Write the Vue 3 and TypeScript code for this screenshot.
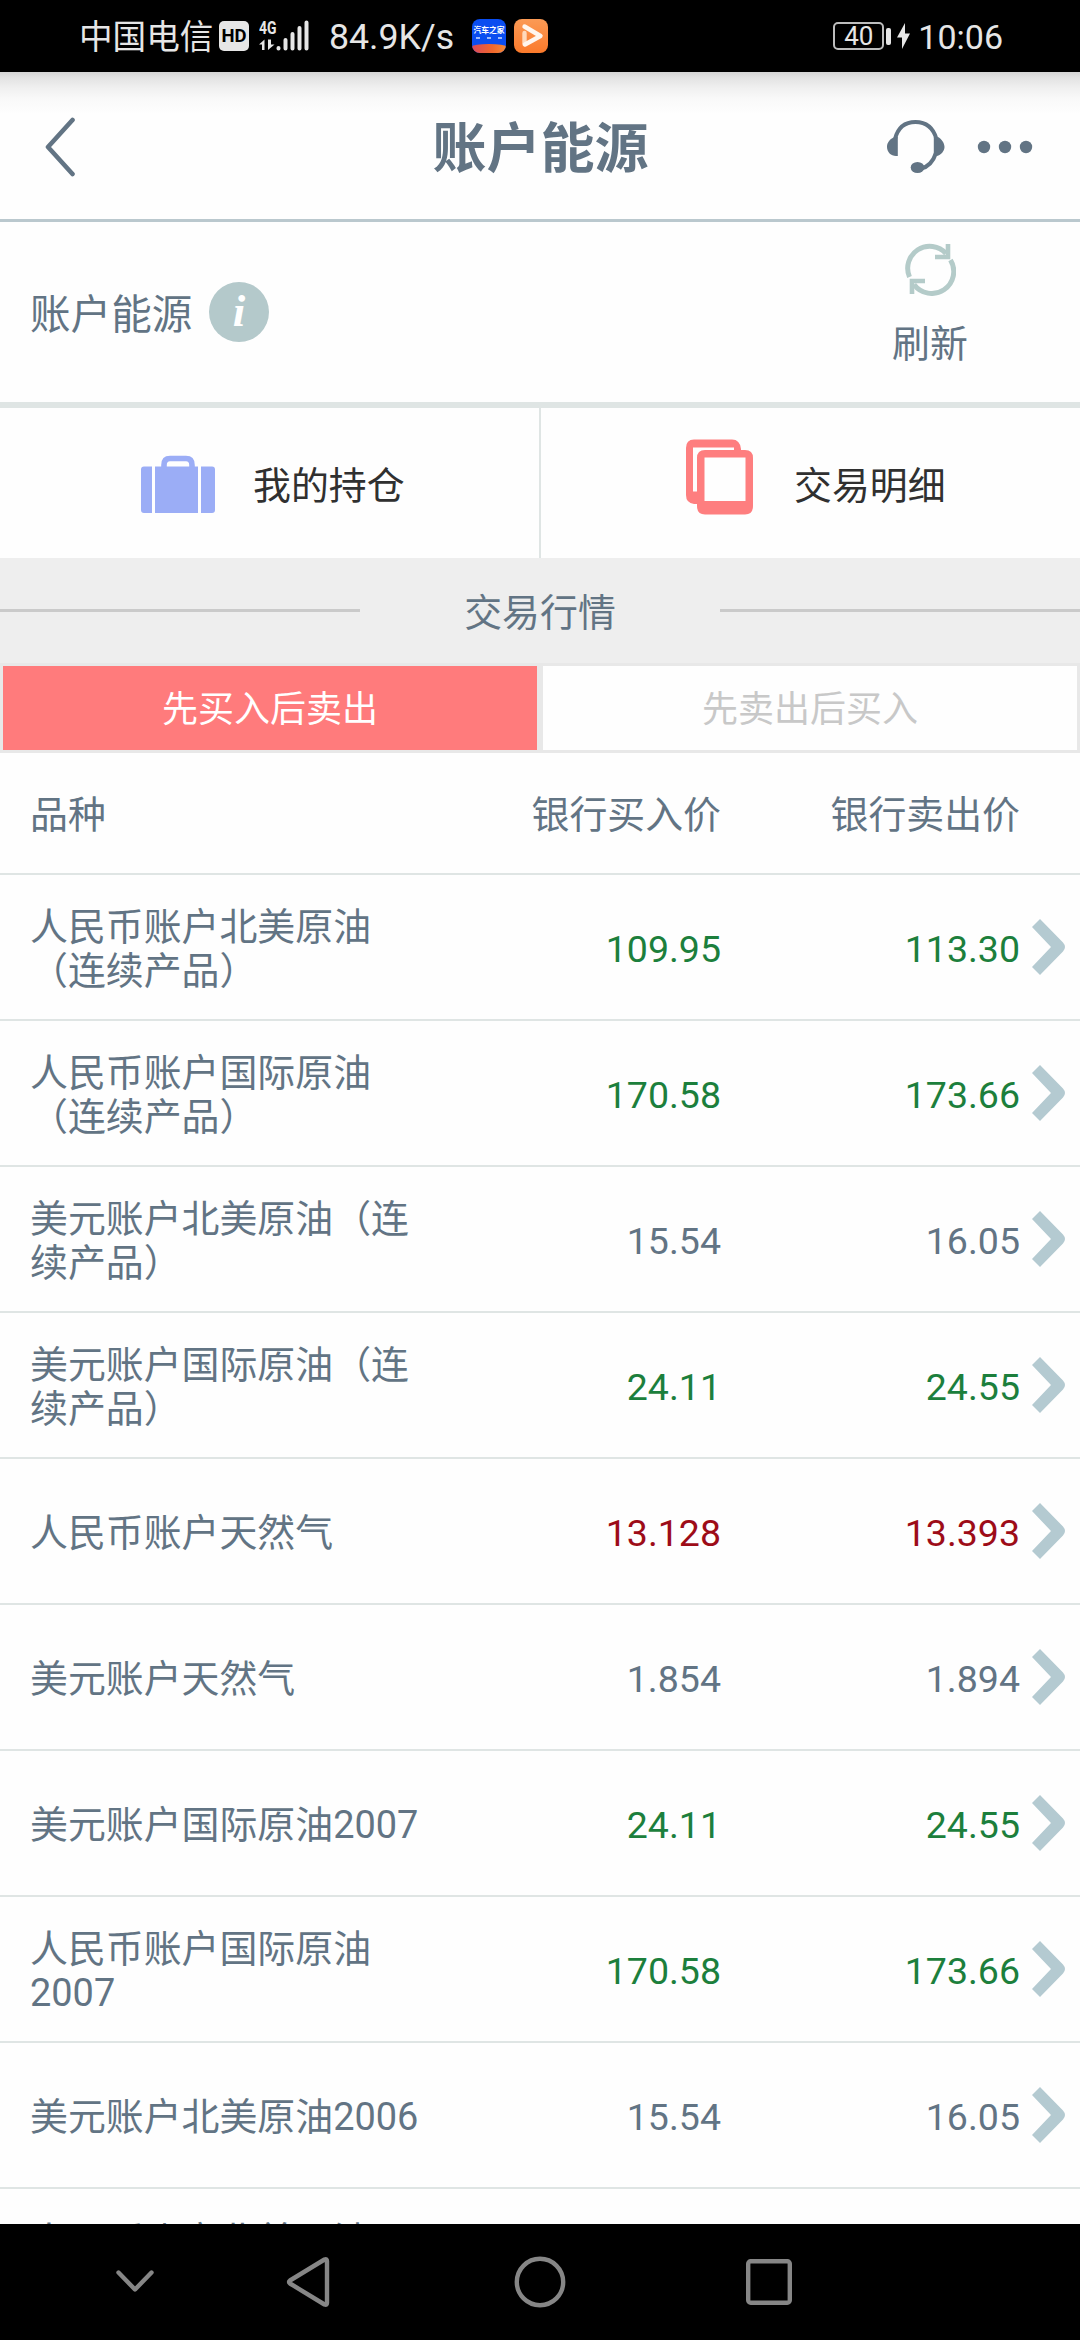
<script setup lang="ts">
type Trend = 'up' | 'down' | 'flat'

interface Quote {
  name: string
  buy: string
  sell: string
  trend: Trend
}

const quotes: Quote[] = [
  { name: '人民币账户北美原油（连续产品）', buy: '109.95', sell: '113.30', trend: 'down' },
  { name: '人民币账户国际原油（连续产品）', buy: '170.58', sell: '173.66', trend: 'down' },
  { name: '美元账户北美原油（连续产品）', buy: '15.54', sell: '16.05', trend: 'flat' },
  { name: '美元账户国际原油（连续产品）', buy: '24.11', sell: '24.55', trend: 'down' },
  { name: '人民币账户天然气', buy: '13.128', sell: '13.393', trend: 'up' },
  { name: '美元账户天然气', buy: '1.854', sell: '1.894', trend: 'flat' },
  { name: '美元账户国际原油2007', buy: '24.11', sell: '24.55', trend: 'down' },
  { name: '人民币账户国际原油2007', buy: '170.58', sell: '173.66', trend: 'down' },
  { name: '美元账户北美原油2006', buy: '15.54', sell: '16.05', trend: 'flat' },
  { name: '人民币账户北美原油2006', buy: '109.95', sell: '113.30', trend: 'down' },
]
</script>

<template>
  <div class="screen">
    <header class="status">
      <span class="carrier">中国电信</span>
      <span class="hd">HD</span>
      <svg class="signal" width="50" height="32" viewBox="0 0 50 32">
        <text x="0" y="13.5" font-size="17.5" font-weight="700" textLength="17.5" lengthAdjust="spacingAndGlyphs" fill="#e6e6e6">4G</text>
        <path d="M0 24.5 L5.5 19.5 V30 H3 V24.5Z M9 19.5 V30 L15.500 24.500 H12 V19.500Z" fill="#e6e6e6" />
        <g stroke="#e6e6e6" stroke-width="4" stroke-linecap="round">
          <path d="M19.500 28 V28.500 M26.500 20 V28.500 M33.500 14 V28.500 M40.500 8 V28.500 M47.500 2.500 V28.500" />
        </g>
      </svg>
      <span class="speed">84.9K/s</span>
      <span class="app-auto">
        <b>汽车之家</b>
        <em></em>
        <i></i>
      </span>
      <svg class="app-video" width="34" height="34" viewBox="0 0 34 34">
        <defs>
          <linearGradient id="orange" x1="0" y1="0" x2="0" y2="1">
            <stop offset="0" stop-color="#fb9a55" />
            <stop offset="1" stop-color="#fb7a2b" />
          </linearGradient>
        </defs>
        <rect width="34" height="34" rx="8" fill="url(#orange)" />
        <path d="M10.500 25 V14" fill="none" stroke="#ffd9bb" stroke-width="4.400" stroke-linecap="round" />
        <path d="M10.500 7.500 L26.500 17 L11 25.500" fill="none" stroke="#fff6ee" stroke-width="4.400" stroke-linecap="round" stroke-linejoin="round" />
      </svg>
      <div class="status-right">
        <span class="battery">40</span>
        <span class="nub"></span>
        <svg class="bolt" width="13" height="26" viewBox="0 0 13 26"><path d="M8 0 L0 14.500 H5 V26 L13 10.500 H8Z" fill="#e6e6e6" /></svg>
        <span class="clock">10:06</span>
      </div>
    </header>

    <nav class="titlebar">
      <svg class="back" width="32" height="60" viewBox="0 0 32 60"><path d="M28.500 3 L4 30 L28.500 57" fill="none" stroke="#627484" stroke-width="4.600" stroke-linecap="round" stroke-linejoin="round" /></svg>
      <h1>账户能源</h1>
      <div class="tools">
        <svg width="58" height="56" viewBox="0 0 58 56">
          <path d="M8 20 C11 8 18 3 28.500 3 C39 3 46 8 49.500 20 M49 34 C46 43 41 48 34 49.500" fill="none" stroke="#627484" stroke-width="4" />
          <path d="M10.800 18 V37 H9 C4 37 0 33 0 28 C0 23.500 3 20 6.500 18.500Z M46.800 18 H51 C54.500 20 57.500 24 57.500 28 C57.500 32 54 36 50 37 H46.800Z" fill="#627484" />
          <ellipse cx="30.500" cy="48.500" rx="6.800" ry="5.600" fill="#627484" />
        </svg>
        <svg class="more" width="56" height="14" viewBox="0 0 56 14"><g fill="#627484"><circle cx="7" cy="7" r="6.200" /><circle cx="28" cy="7" r="6.200" /><circle cx="49" cy="7" r="6.200" /></g></svg>
      </div>
    </nav>

    <section class="account">
      <span class="account-name">账户能源</span>
      <span class="info">i</span>
      <div class="refresh">
        <svg width="52" height="54" viewBox="0 0 52 54">
          <g fill="none" stroke="#b4cbc9" stroke-width="5">
            <path d="M5.500 35 A22 22 0 0 1 42 11.500 M46.500 18 A22 22 0 0 1 10 42.500" />
            <path d="M44 2 V15 H31 M8 52 V39 H21" stroke-width="4.600" />
          </g>
        </svg>
        <span>刷新</span>
      </div>
    </section>

    <section class="shortcuts">
      <div class="shortcut">
        <svg width="76" height="76" viewBox="0 0 76 76">
          <g fill="#9badf6">
            <path d="M4 27.500 H12 V74 H4 Q1 74 1 71 V30.500 Q1 27.500 4 27.500Z M15 27.500 H58 V74 H15Z M61 27.500 H72 Q75 27.500 75 30.500 V71 Q75 74 72 74 H61Z" />
          </g>
          <path d="M24 29 V26 Q24 19.500 30 19.500 H46 Q52 19.500 52 26 V29" fill="none" stroke="#9badf6" stroke-width="5.600" />
        </svg>
        <span>我的持仓</span>
      </div>
      <div class="shortcut">
        <svg width="76" height="76" viewBox="0 0 76 76">
          <path d="M8 0.500 H47 Q55 0.500 56 10 V11 H60 Q68 11 68 19 V67 Q68 75.500 60 75.500 H20 Q12 75.500 12 67 V65 H9 Q1 64 1 56 V9 Q1 0.500 9 0.500Z M8 8.500 V52.500 H12 V19 Q12 11 20 11 H49 V8.500Z M19.500 18.500 V62 H60.500 V18.500Z" fill="#fe7e7f" fill-rule="evenodd" />
        </svg>
        <span>交易明细</span>
      </div>
    </section>

    <div class="band">
      <i></i>
      <span>交易行情</span>
      <i></i>
    </div>

    <div class="tabs">
      <div class="tab active">先买入后卖出</div>
      <div class="tab">先卖出后买入</div>
    </div>

    <main class="market">
      <div class="row head">
        <span class="name">品种</span>
        <span class="buy">银行买入价</span>
        <span class="sell">银行卖出价</span>
      </div>
      <div v-for="q in quotes" :key="q.name" class="row">
        <span class="name">{{ q.name }}</span>
        <span class="buy price" :class="q.trend">{{ q.buy }}</span>
        <span class="sell price" :class="q.trend">{{ q.sell }}</span>
        <svg class="go" width="33" height="56" viewBox="0 0 33 56"><path d="M8 0 L31 23.500 Q35 28 31 32.500 L8 56 L0 48 L19 28 L0 8Z" fill="#b4cad1" /></svg>
      </div>
    </main>

    <footer class="softkeys">
      <svg class="k-down" width="38" height="24" viewBox="0 0 38 24"><path d="M2.500 2.500 L19 19.500 L35.500 2.500" /></svg>
      <svg class="k-back" width="44" height="52" viewBox="0 0 44 52"><path d="M38.500 3.500 Q41 2.500 41 5 V47 Q41 49.500 38.500 48.500 L4 27.500 Q2 26 4 24.500Z" /></svg>
      <svg class="k-home" width="52" height="52" viewBox="0 0 52 52"><circle cx="26" cy="26" r="23.200" /></svg>
      <svg class="k-recent" width="46" height="46" viewBox="0 0 46 46"><rect x="2.200" y="2.200" width="41.600" height="41.600" rx="2.500" /></svg>
    </footer>
  </div>
</template>

<style>
body {
  background: #fff;
}
</style>

<style scoped>
.screen {
  width: 1080px;
  height: 2340px;
  display: flex;
  flex-direction: column;
  overflow: hidden;
  background: #fefefe;
  color: #627484;
  font-family: Roboto, "Noto Sans CJK SC", sans-serif;
  font-size: 37.9px;
  line-height: 44px;
  white-space: nowrap;
}
svg {
  display: block;
  flex: none;
}
.status {
  flex: none;
  box-sizing: border-box;
  height: 72px;
  padding: 0 77px 0 79px;
  display: flex;
  align-items: center;
  background: #000;
  color: #e6e6e6;
}
.carrier {
  width: 140px;
  padding-top: 4px;
  font-size: 33.600px;
}
.hd {
  width: 30px;
  height: 30px;
  border-radius: 5px;
  background: #e6e6e6;
  color: #000;
  font-size: 18.500px;
  font-weight: 700;
  line-height: 30px;
  text-align: center;
}
.signal {
  margin-left: 10px;
}
.speed {
  width: 143px;
  margin-left: 20px;
  padding-top: 2px;
  font-size: 35.700px;
}
.app-auto {
  width: 34px;
  height: 34px;
  border-radius: 8px;
  overflow: hidden;
  display: flex;
  flex-direction: column;
  justify-content: space-between;
  align-items: center;
  background: #0a4df0;
  color: #fff;
}
.app-auto b {
  padding-top: 7px;
  font-size: 7.800px;
  line-height: 10px;
}
.app-auto em {
  width: 26px;
  height: 2px;
  margin-top: -4px;
  background: repeating-linear-gradient(90deg, #9db9fb 0 4px, transparent 4px 11px);
}
.app-auto i {
  width: 34px;
  height: 9px;
  border-radius: 50% 50% 0 0 / 30% 30% 0 0;
  background: linear-gradient(90deg, #d9485a, #f0672c 60%, #f58a35);
}
.app-video {
  margin-left: 8px;
}
.status-right {
  margin-left: auto;
  display: flex;
  align-items: center;
}
.battery {
  box-sizing: border-box;
  width: 51px;
  height: 28px;
  border: 2px solid #bdbdbd;
  border-radius: 5px;
  font-size: 26px;
  line-height: 25px;
  text-align: center;
}
.nub {
  width: 5px;
  height: 17px;
  margin-left: 2px;
  border-radius: 2px;
  background: #e6e6e6;
}
.bolt {
  margin-left: 6px;
}
.clock {
  margin-left: 8px;
  padding-top: 2px;
  font-size: 34px;
}
.titlebar {
  flex: none;
  box-sizing: border-box;
  height: 150px;
  padding: 2px 47px 0 44px;
  border-bottom: 3px solid #bac8ce;
  display: grid;
  grid-template-columns: 1fr auto 1fr;
  align-items: center;
  background: linear-gradient(#d5d5d5 0, #e3e3e3 6px, #f0f0f0 16px, #f9f9f9 27px, #fefefe 42px);
}
h1 {
  margin: 0;
  padding: 7px 0 0 4px;
  font-size: 54px;
  font-weight: 700;
  line-height: 70px;
}
.tools {
  display: flex;
  justify-content: flex-end;
  align-items: center;
  gap: 32px;
}
.account {
  flex: none;
  box-sizing: border-box;
  height: 186px;
  padding-left: 30px;
  border-bottom: 6px solid #dfe5e4;
  display: flex;
  align-items: center;
}
.account-name {
  width: 179px;
  padding-top: 5px;
  font-size: 40.600px;
}
.info {
  width: 60px;
  height: 60px;
  border-radius: 50%;
  background: #b4c9cb;
  color: #fff;
  font: italic 700 45px/58px "Liberation Serif", serif;
  text-align: center;
}
.refresh {
  width: 120px;
  margin: -16px 90px 0 auto;
  display: flex;
  flex-direction: column;
  align-items: center;
  gap: 26px;
}
.shortcuts {
  flex: none;
  height: 150px;
  display: flex;
  color: #303030;
}
.shortcut {
  box-sizing: border-box;
  width: 540px;
  padding-left: 140px;
  display: flex;
  align-items: center;
  gap: 37px;
}
.shortcut:first-child {
  border-right: 1px solid #dfe5e4;
}
.shortcut + .shortcut {
  border-left: 1px solid #dfe5e4;
  padding-left: 144px;
  gap: 33px;
}
.shortcut svg {
  margin-top: -13px;
}
.shortcut span {
  margin-top: 6px;
}
.band {
  flex: none;
  height: 105px;
  display: flex;
  align-items: center;
  background: #eee;
}
.band i {
  width: 360px;
  height: 3px;
  background: #cacaca;
}
.band span {
  width: 360px;
  padding-top: 4px;
  text-align: center;
}
.tabs {
  flex: none;
  display: flex;
}
.tab {
  box-sizing: border-box;
  width: 540px;
  height: 90px;
  border: 3px solid #e8e8e8;
  color: #c8c8c8;
  font-size: 36px;
  line-height: 88px;
  text-align: center;
}
.tab.active {
  background: #ff7b7c;
  background-clip: padding-box;
  color: #fff;
}
.market {
  flex: 1;
  min-height: 0;
  overflow: hidden;
}
.row {
  height: 144px;
  padding-left: 30px;
  border-bottom: 2px solid #dfe5e4;
  display: flex;
  align-items: center;
}
.row.head {
  height: 120px;
}
.row span {
  padding-top: 4px;
}
.name {
  width: 400px;
  white-space: normal;
}
.buy {
  width: 291px;
  text-align: right;
}
.sell {
  width: 299px;
  text-align: right;
}
.price {
  font-size: 37.500px;
}
.go {
  margin-left: 12px;
}
.down {
  color: #1c7f3c;
}
.up {
  color: #9d0c18;
}
.softkeys {
  flex: none;
  height: 116px;
  display: flex;
  align-items: center;
  background: #000;
}
.softkeys svg {
  fill: none;
  stroke: #868686;
  stroke-width: 4.400;
  stroke-linecap: round;
  stroke-linejoin: round;
}
.k-down {
  margin-left: 116px;
}
.k-back {
  margin-left: 132px;
}
.k-home {
  margin-left: 184px;
}
.k-recent {
  margin-left: 180px;
}
</style>
